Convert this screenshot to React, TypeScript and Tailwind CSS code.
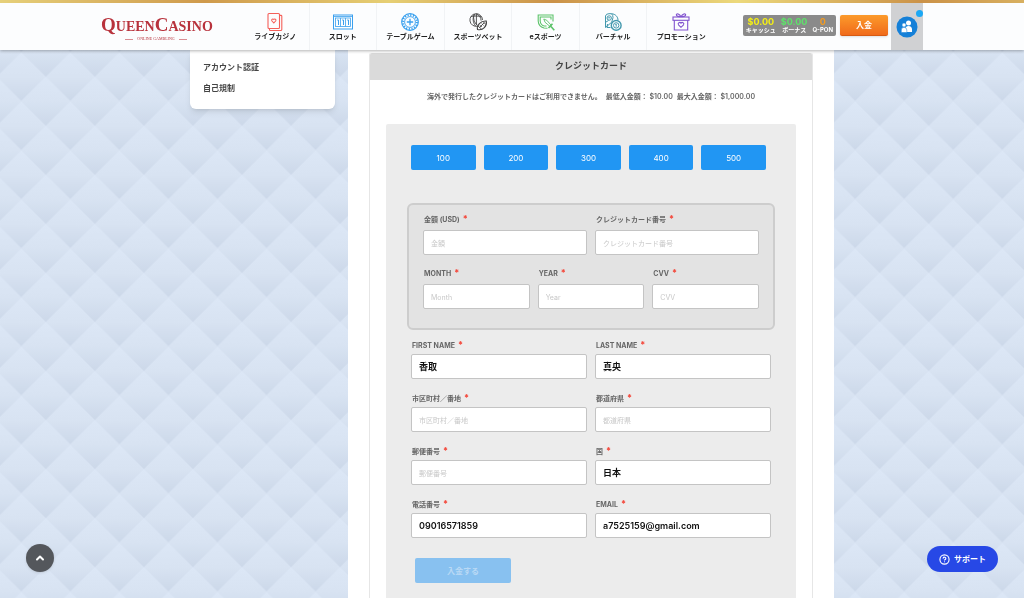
import type { ReactNode } from "react";
import { ChevronUp, CircleHelp } from "lucide-react";

interface NavItem {
  label: string;
  icon: ReactNode;
}

const navItems: NavItem[] = [
  {
    label: "ライブカジノ",
    icon: (
      <svg viewBox="0 0 20 20" className="size-5 text-[#f4605a]" fill="none" stroke="currentColor" strokeWidth="1.1">
        <rect x="3" y="1.500" width="11.500" height="15" rx="1" />
        <path d="M4.500 16.500v1.200q0 .8.800.8h10.500q1 0 1-1V4.200q0-.8-.8-.8h-1.500" />
        <path d="M8.800 11 6.800 8.800a1.200 1.200 0 0 1 2-1.300 1.200 1.200 0 0 1 2 1.300z" />
      </svg>
    ),
  },
  {
    label: "スロット",
    icon: (
      <svg viewBox="0 0 22 20" className="h-5 w-[22px] text-[#3aa0ee]" fill="none" stroke="currentColor">
        <rect x="1.500" y="3" width="19" height="14" />
        <rect x="3.500" y="6" width="15" height="8.500" strokeWidth=".8" />
        <path d="M8.500 6v8.500M13.500 6v8.500M1.500 4.500h19" strokeWidth=".8" />
        <path d="M5.200 8h1.300v5M10.200 8h1.300v5M15.200 8h1.300v5" />
      </svg>
    ),
  },
  {
    label: "テーブルゲーム",
    icon: (
      <svg viewBox="0 0 20 20" className="size-5 text-[#3aa0ee]" fill="none" stroke="currentColor">
        <circle cx="10" cy="10" r="8.300" strokeWidth="1.200" />
        <circle cx="10" cy="10" r="7" strokeWidth="2" strokeDasharray="1.200 1.550" />
        <circle cx="10" cy="10" r="5.400" strokeWidth=".9" />
        <path d="M10 6.800v6.400M6.800 10h6.400" strokeWidth="1.300" />
      </svg>
    ),
  },
  {
    label: "スポーツベット",
    icon: (
      <svg viewBox="0 0 20 20" className="size-5 text-[#444]" fill="none" stroke="currentColor" strokeWidth=".9">
        <path d="M9.500 14.200A6.300 6.300 0 1 1 14.500 8" />
        <path d="M7.200 1.900C4.300 5 4.500 10 7.500 14M8.500 1.600c3 1.800 4.500 4 4.600 7M6 2.300c-1 4 0 8.500 3.500 11M3 4.500c2-.5 8-1 10.500.5M8.400 2v11" />
        <path d="M9.500 17.500c-1-4 3-9 8.800-8.500 1 5-3.300 10-8.800 8.500z" strokeWidth="1.100" />
        <path d="m11.300 15.700 5-5M12 13.200l1.800 1.800M13.700 11.600l1.800 1.800M10 14l3.500 3M15 9.500l2.800 3" />
      </svg>
    ),
  },
  {
    label: "eスポーツ",
    icon: (
      <svg viewBox="0 0 20 20" className="size-5 text-[#5cc36a]" fill="none" stroke="currentColor" strokeWidth="1.100">
        <path d="M17 9.500V3H2.200v6q.3 5.500 5.800 7l3.500.3" />
        <path d="M15 7.500V5H4.200v4q.3 4 4 5h2.300" />
        <path d="m7.800 7 1.200 3.200 5 4.300 1.200-1.200-4.400-5z" strokeWidth=".9" />
        <path d="m12.500 16 4-4.200M15 14.500l3.300 3.700" strokeWidth="1.600" />
      </svg>
    ),
  },
  {
    label: "バーチャル",
    icon: (
      <svg viewBox="0 0 20 20" className="size-5 text-[#4298ad]" fill="none" stroke="currentColor" strokeWidth="1">
        <path d="M2.500 15.500V4Q3 1.700 6 1.700h2.500q1.700 1.800 1.500 4l-1.300 4.500L2.500 15.500z" />
        <circle cx="6.200" cy="6" r="2.200" />
        <path d="M5.200 5.800h2M8.500 1.700c4 .3 6.500 3.200 6.500 6.500M4.500 12l-.5 3.500h3.500M3 10l2.500-1.500" />
        <circle cx="13.200" cy="13.400" r="4.900" strokeWidth="1.400" />
        <circle cx="13.200" cy="13.400" r="2.700" />
        <path d="M13.200 12v2.700M12.300 12.500l.9-.5" />
      </svg>
    ),
  },
  {
    label: "プロモーション",
    icon: (
      <svg viewBox="0 0 20 20" className="size-5 text-[#8254cf]" fill="none" stroke="currentColor" strokeWidth="1.100">
        <rect x="2" y="5" width="16" height="3.300" />
        <path d="M3.300 8.300V18h13.400V8.300" />
        <path d="M10 4.700C8.500 2 5.500 1 5.300 2.800 5.200 4.400 8 4.700 10 4.700zM10 4.700c1.500-2.700 4.500-3.700 4.700-1.900.1 1.600-2.700 1.900-4.700 1.900z" />
        <path d="m10 15.300-2.500-2.500a1.400 1.400 0 0 1 2.500-1.700 1.400 1.400 0 0 1 2.500 1.700z" />
      </svg>
    ),
  },
];

const balances = [
  { amount: "$0.00", label: "キャッシュ", color: "text-[#f5f014]" },
  { amount: "$0.00", label: "ボーナス", color: "text-[#5de36a]" },
  { amount: "0", label: "Q-PON", color: "text-[#f59b1e]" },
];

const amounts = [100, 200, 300, 400, 500];

function Logo() {
  return (
    <a href="#" aria-label="Queen Casino" className="flex w-[141px] flex-col text-[#b8323c]">
      <span className="font-['Liberation_Serif',serif] text-sm leading-5 font-bold whitespace-nowrap">
        <span className="text-[19px]">Q</span>UEEN<span className="text-[19px]">C</span>ASINO
      </span>
      <span className="flex w-[110px] items-center justify-center gap-1 font-['Liberation_Serif',serif] text-[4px] leading-[4px]">
        <span className="h-px w-2 bg-[#d98c92]" />
        ONLINE GAMBLING
        <span className="h-px w-2 bg-[#d98c92]" />
      </span>
    </a>
  );
}

function Header() {
  return (
    <header className="sticky top-0 z-20 bg-[#fcfdfe] shadow-[0_1px_3px_rgba(0,0,0,0.3)]">
      <div className="h-[3px] bg-[linear-gradient(90deg,#e6d07a,#cf9a4c_20%,#e6cf74_38%,#cb9248_54%,#ecd97c_72%,#cb9248_90%,#d8b060)]" />
      <div className="mx-auto flex h-[47px] max-w-[822px]">
        <div className="pt-3">
          <Logo />
        </div>
        <nav className="grid w-[473px] grid-cols-7">
          {navItems.map((item) => (
            <a
              key={item.label}
              href="#"
              className="flex flex-col items-center border-r border-[#f1f3f5] pt-[9px] text-[7px] leading-[10px] font-bold whitespace-nowrap text-[#222] last:border-r-0"
            >
              {item.icon}
              {item.label}
            </a>
          ))}
        </nav>
        <div className="ml-auto flex gap-1 pt-3">
          <div className="flex h-[21px] gap-[5px] rounded-xs bg-[#8a8a8a] px-[3px]">
            {balances.map((balance) => (
              <div key={balance.label} className="flex flex-col items-center pt-[2px] font-bold whitespace-nowrap">
                <span className={`text-[9px] leading-[9px] ${balance.color}`}>{balance.amount}</span>
                <span className="text-[6px] leading-[7px] text-white">{balance.label}</span>
              </div>
            ))}
          </div>
          <button className="h-[21px] w-12 rounded-xs border-b border-[#d65a12] bg-linear-to-b from-[#fb9a2b] to-[#f06a1a] text-[8px] font-bold text-white shadow-sm">
            入金
          </button>
        </div>
        <button aria-label="マイアカウント" className="relative ml-[3px] flex w-8 items-center justify-center bg-[#d0d1d3]">
          <svg viewBox="0 0 22 22" className="size-[22px]">
            <circle cx="11" cy="11" r="10.500" fill="#1580d8" />
            <circle cx="12.500" cy="7" r="2.500" fill="#fff" />
            <path d="M9.500 16v-3q0-3 3-3t3.500 3v3z" fill="#fff" />
            <circle cx="8" cy="9" r="2" fill="#fff" stroke="#1580d8" strokeWidth=".5" />
            <path d="M5.300 16.500V14q0-2.700 2.700-2.700T10.800 14v2.500z" fill="#fff" stroke="#1580d8" strokeWidth=".5" />
          </svg>
          <span className="absolute top-[7px] right-0 size-[7px] rounded-full bg-[#1ba8f5]" />
        </button>
      </div>
    </header>
  );
}

function Backdrop() {
  return (
    <svg className="fixed inset-0 -z-10 h-full w-full" aria-hidden="true">
      <defs>
        <linearGradient id="quilt" x1="0" y1="0" x2="0" y2="1">
          <stop offset="0" stopColor="#dce7f6" />
          <stop offset=".5" stopColor="#d8e3f2" />
          <stop offset="1" stopColor="#ccd8e9" />
        </linearGradient>
        <pattern id="diamonds" x="-3.200" y="3" width="49.050" height="49.050" patternUnits="userSpaceOnUse">
          <rect width="50" height="50" fill="#d5e0f0" />
          <path fill="url(#quilt)" d="M24.500 0 49 24.500 24.500 49 0 24.500z" />
          <path fill="url(#quilt)" d="M0-24.500 24.500 0 0 24.500-24.500 0z" />
          <path fill="url(#quilt)" d="M49-24.500 73.500 0 49 24.500 24.500 0z" />
          <path fill="url(#quilt)" d="M0 24.500 24.500 49 0 73.500-24.500 49z" />
          <path fill="url(#quilt)" d="M49 24.500 73.500 49 49 73.500 24.500 49z" />
        </pattern>
      </defs>
      <rect width="100%" height="100%" fill="url(#diamonds)" />
    </svg>
  );
}

interface FieldProps {
  id: string;
  label: string;
  placeholder?: string;
  value?: string;
  inset?: boolean;
}

function Field({ id, label, placeholder, value, inset }: FieldProps) {
  return (
    <div className={`flex min-w-0 flex-col ${inset ? "gap-1" : "gap-[2px]"}`}>
      <label htmlFor={id} className="flex h-3 items-start gap-[3px] px-px text-[7px] leading-3 font-bold text-[#666]">
        {label}
        <span className="text-[9px] leading-[9px] text-[#f44336]">*</span>
      </label>
      <input
        id={id}
        defaultValue={value}
        placeholder={placeholder}
        className="h-[25px] w-full rounded-xs border border-[#c4c4c4] bg-white px-[7px] text-[9px] font-semibold text-[#111] outline-none placeholder:text-[7px] placeholder:font-normal placeholder:text-[#c8c8c8] focus:border-[#2196f3]"
      />
    </div>
  );
}

function DepositForm() {
  return (
    <form className="flex-1 rounded-t-xs bg-[#ececec] px-[21px] pt-[21px] pb-3">
      <div className="mr-[9px] ml-1 grid grid-cols-5 gap-2">
        {amounts.map((amount) => (
          <button key={amount} type="button" className="h-[25px] rounded-xs bg-[#2196f3] text-[8px] text-white">
            {amount}
          </button>
        ))}
      </div>
      <div className="mt-[33px] flex flex-col gap-[13px] rounded-md border-2 border-[#cdcdcd] bg-[#e3e3e3] px-[14px] pt-[9px] pb-[19px]">
        <div className="grid grid-cols-2 gap-2">
          <Field inset id="amount" label="金額 (USD)" placeholder="金額" />
          <Field inset id="card" label="クレジットカード番号" placeholder="クレジットカード番号" />
        </div>
        <div className="grid grid-cols-3 gap-2">
          <Field inset id="month" label="MONTH" placeholder="Month" />
          <Field inset id="year" label="YEAR" placeholder="Year" />
          <Field inset id="cvv" label="CVV" placeholder="CVV" />
        </div>
      </div>
      <div className="mt-[10px] grid grid-cols-2 gap-x-2 gap-y-[14px] px-1">
        <Field id="first-name" label="FIRST NAME" value="香取" />
        <Field id="last-name" label="LAST NAME" value="真央" />
        <Field id="address" label="市区町村／番地" placeholder="市区町村／番地" />
        <Field id="prefecture" label="都道府県" placeholder="都道府県" />
        <Field id="zip" label="郵便番号" placeholder="郵便番号" />
        <Field id="country" label="国" value="日本" />
        <Field id="phone" label="電話番号" value="09016571859" />
        <Field id="email" label="EMAIL" value="a7525159@gmail.com" />
      </div>
      <button
        type="submit"
        disabled
        className="mt-5 ml-2 h-[25px] w-24 rounded-xs bg-[#88c1f0] text-[8px] font-bold text-[#b9d9f5]"
      >
        入金する
      </button>
    </form>
  );
}

function App() {
  return (
    <div className="relative isolate flex min-h-screen flex-col font-[Inter,'Noto_Sans_CJK_JP',sans-serif]">
      <Backdrop />
      <Header />
      <div className="mx-auto flex w-full max-w-[644px] flex-1 gap-[13px]">
        <aside className="w-[145px] shrink-0 self-start rounded-b-md bg-white px-[13px] pt-3 pb-[15px] text-[8px] leading-[11px] font-semibold text-[#444] shadow-md">
          <ul className="flex flex-col gap-[10px]">
            <li>
              <a href="#">アカウント認証</a>
            </li>
            <li>
              <a href="#">自己規制</a>
            </li>
          </ul>
        </aside>
        <main className="flex min-w-0 flex-1 flex-col bg-white px-[21px] pt-[3px]">
          <section className="flex flex-1 flex-col rounded-t-xs border-x border-[#e6e6e6]">
            <h1 className="h-[27px] rounded-t-xs bg-[#dadada] text-center text-[9px] leading-[26px] font-bold text-[#444]">
              クレジットカード
            </h1>
            <p className="flex justify-center gap-1 pt-3 pb-[22px] text-[7px] leading-[10px] font-semibold whitespace-nowrap text-[#666]">
              <span>海外で発行したクレジットカードはご利用できません。</span>
              <span>最低入金額： $10.00</span>
              <span>最大入金額： $1,000.00</span>
            </p>
            <div className="flex flex-1 flex-col px-4">
              <DepositForm />
            </div>
          </section>
        </main>
      </div>
      <button
        aria-label="トップへ戻る"
        className="fixed bottom-[26px] left-[26px] z-10 flex size-7 items-center justify-center rounded-full bg-[#54575c] text-white shadow-sm"
      >
        <ChevronUp size={12} strokeWidth={4} />
      </button>
      <button className="fixed right-[26px] bottom-[26px] z-10 flex h-[26px] w-[71px] items-center justify-center gap-1 rounded-full bg-[#2748e6] text-[8px] font-bold text-white">
        <CircleHelp size={11} strokeWidth={2.5} />
        サポート
      </button>
    </div>
  );
}

export default App;
